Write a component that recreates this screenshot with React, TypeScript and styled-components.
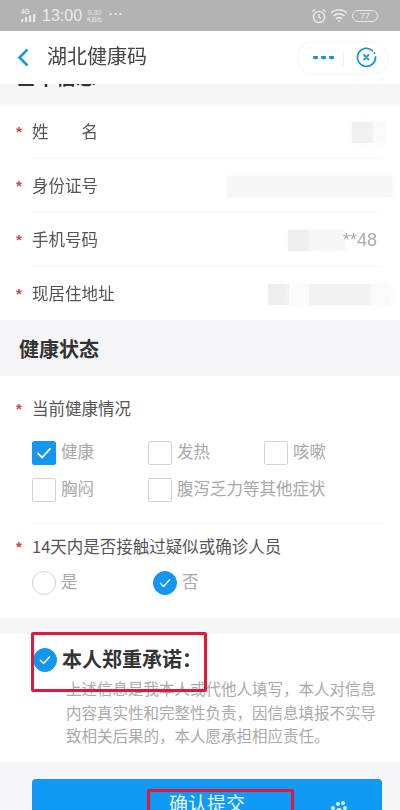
import React from "react";
import styled, { createGlobalStyle } from "styled-components";

const Global = createGlobalStyle`
  html, body { margin: 0; padding: 0; background: #f6f6f8; }
  body { width: 400px; height: 810px; overflow: hidden; font-family: "Noto Sans CJK SC", "Liberation Sans", sans-serif; }
  * { box-sizing: border-box; }
`;
const Page = styled.div`
  position: relative; width: 400px; height: 810px; overflow: hidden; display: flex; flex-direction: column; filter: blur(0.45px);
`;
const StatusBar = styled.div`
  height: 31px; flex: none; background: #b3b3b3; display: flex; align-items: center; padding: 0 22px 0 21px; color: #e9e9e9;
`;
const Time = styled.span` font: 16px "Liberation Sans", sans-serif; margin-left: 4px; `;
const Speed = styled.span`
  font: 7px/7px "Liberation Sans", sans-serif; margin-left: 5px; text-align: center; display: flex; flex-direction: column;
`;
const Ellipsis = styled.span` font: bold 13px "Liberation Sans", sans-serif; margin: -4px 0 0 7px; letter-spacing: 0.5px; `;
const StatusRight = styled.div` margin-left: auto; display: flex; align-items: center; gap: 3px; `;
const Battery = styled.span`
  width: 26px; height: 12px; border: 1px solid #e9e9e9; border-radius: 6px; display: flex; align-items: center; justify-content: center; font: 9px "Liberation Sans", sans-serif; margin-left: 1px;
`;
const Nav = styled.header`
  height: 53px; flex: none; background: #fff; display: flex; align-items: center; padding: 0 11px 0 17px; position: relative; z-index: 1;
`;
const Title = styled.h1` margin: 0 0 0 18px; padding-bottom: 4px; font-size: 20px; line-height: 28px; font-weight: 400; color: #444; `;
const Capsule = styled.div`
  margin-left: auto; width: 92px; height: 34px; border: 1px solid #f3f5f7; border-radius: 17px; display: flex; align-items: center; padding-left: 15px;
`;
const Dots = styled.span` display: flex; gap: 3px; width: 30px; `;
const Dot = styled.i` width: 5px; height: 3px; background: #1a8fd0; border-radius: 1px; `;
const Divider = styled.span` width: 1px; height: 16px; background: #f0f0f0; margin-right: 12px; `;
const Strip = styled.div`
  height: 21px; flex: none; background: #f7f7f7; overflow: hidden; padding-left: 16px;
`;
const ClippedHeading = styled.div`
  font-size: 20px; line-height: 28px; font-weight: 700; color: #333; margin-top: -21px;
`;
const Card = styled.section<{ $h: number }>`
  background: #fff; height: ${(p) => p.$h}px; flex: none; padding: 0 18px 0 16px;
`;
const InfoRow = styled.div<{ $last?: boolean }>`
  height: 54px; display: flex; align-items: center; position: relative;
  &::after { content: ""; display: ${(p) => (p.$last ? "none" : "block")}; position: absolute; left: 16px; right: 0; bottom: 0; height: 1px; background: #f9f9f9; }
`;
const Star = styled.span` width: 16px; flex: none; color: #d6404f; font: bold 15px/16px "Liberation Sans", sans-serif; `;
const Label = styled.span` font-size: 16.5px; line-height: 24px; color: #555; padding-bottom: 3px; `;
const SpacedLabel = styled(Label)` width: 66px; display: flex; justify-content: space-between; `;
const Values = styled.div<{ $bleed?: number }>` margin-left: auto; margin-right: -${(p) => p.$bleed ?? 0}px; display: flex; align-items: center; `;
const Smudge = styled.span<{ $w: number; $h?: number; $c: string }>`
  display: block; width: ${(p) => p.$w}px; height: ${(p) => p.$h ?? 21}px; background: ${(p) => p.$c}; box-shadow: 0 0 7px #f9f9f9;
`;
const Masked = styled.span` font: 18px "Liberation Sans", sans-serif; color: #aaa; margin-right: 5px; margin-left: -2px; `;
const SectionHead = styled.div`
  height: 56px; flex: none; background: #f5f5f8; display: flex; align-items: center; padding: 0 0 0 19px; font-size: 20px; font-weight: 700; color: #333;
`;
const Question = styled.div<{ $top: number }>` height: 24px; display: flex; align-items: center; margin-top: ${(p) => p.$top}px; `;
const CheckGrid = styled.div`
  display: grid; grid-template-columns: 116px 116px 1fr; row-gap: 13px; margin: 20px 0 0 16px; padding-bottom: 21px; border-bottom: 1px solid #f6f6f6;
`;
const Option = styled.div<{ $span?: number }>`
  display: flex; align-items: center; gap: 5px; height: 24px; grid-column: span ${(p) => p.$span ?? 1};
`;
const OptionText = styled.span` font-size: 16.5px; line-height: 24px; color: #a8a8a8; white-space: nowrap; padding-bottom: 4px; `;
const Box = styled.span<{ $on?: boolean }>`
  width: 24px; height: 24px; flex: none; border-radius: 2px; border: 1px solid ${(p) => (p.$on ? "#1296f0" : "#d4d4d4")}; background: ${(p) => (p.$on ? "#1296f0" : "#fff")}; display: flex; align-items: center; justify-content: center;
`;
const Circle = styled.span<{ $on?: boolean }>`
  width: 24px; height: 24px; flex: none; border-radius: 50%; border: 1px solid ${(p) => (p.$on ? "#1296f0" : "#d4d4d4")}; background: ${(p) => (p.$on ? "#1296f0" : "#fff")}; display: flex; align-items: center; justify-content: center;
`;
const RadioRow = styled.div` display: flex; margin: 12px 0 0 16px; `;
const RadioCol = styled.div<{ $w: number }>` width: ${(p) => p.$w}px; `;
const Gap = styled.div` height: 16px; flex: none; background: #f5f5f8; `;
const PromiseCard = styled.section`
  height: 128px; flex: none; background: #fff; padding: 12px 22px 0 33px;
`;
const PromiseHead = styled.div` display: flex; align-items: center; gap: 5px; height: 28px; `;
const PromiseTitle = styled.span` font-size: 20px; line-height: 28px; font-weight: 700; color: #333; white-space: nowrap; padding-bottom: 2px; `;
const PromiseText = styled.p`
  margin: 3px 0 0 33px; font-size: 15.5px; line-height: 23.7px; color: #aaa; width: 314px;
`;
const Footer = styled.div` flex: 1; background: #f5f5f8; padding: 17px 18px 0 32px; `;
const Submit = styled.button`
  position: relative; width: 350px; height: 60px; border: 0; border-radius: 4px; background: #0f9bf5; color: #e8f6ff; font: 19px/26px "Noto Sans CJK SC", sans-serif; padding: 0 0 13px; display: block;
`;
const Paw = styled.svg` position: absolute; left: 297px; top: 21px; `;
const RedMark = styled.div<{ $l: number; $t: number; $w: number; $h: number }>`
  position: absolute; left: ${(p) => p.$l}px; top: ${(p) => p.$t}px; width: ${(p) => p.$w}px; height: ${(p) => p.$h}px; border: 3px solid #e0183c; border-radius: 2px;
`;

const Check = ({ s }: { s: number }) => (
  <svg width={s} height={s} viewBox="0 0 24 24" fill="none" stroke="#fff" strokeWidth="2.4" strokeLinecap="round" strokeLinejoin="round">
    <path d="M4 12.5l5.5 5.5L20 6.5" />
  </svg>
);

export default function App() {
  return (
    <Page>
      <Global />
      <StatusBar>
        <svg width="17" height="15" viewBox="0 0 17 15" fill="#e9e9e9">
          <text x="0" y="6" fontSize="6.5" fontWeight="700" fontFamily="Liberation Sans">4G</text>
          <rect x="0" y="11" width="2.2" height="3" /><rect x="4" y="9" width="2.2" height="5" /><rect x="8" y="7.5" width="2.2" height="6.5" /><rect x="12" y="6" width="2.2" height="8" />
        </svg>
        <Time>13:00</Time>
        <Speed><span>0.30</span><span>KB/s</span></Speed>
        <Ellipsis>···</Ellipsis>
        <StatusRight>
          <svg width="16" height="16" viewBox="0 0 16 16" fill="none" stroke="#e9e9e9" strokeWidth="1.5">
            <circle cx="8" cy="9" r="5.6" /><path d="M8 6v3l2 1.5M1.5 3.5L4 1.5M14.5 3.5L12 1.5" />
          </svg>
          <svg width="18" height="15" viewBox="0 0 18 15" fill="none" stroke="#e9e9e9" strokeWidth="1.6">
            <path d="M1 5c4.5-4.4 11.500-4.400 16 0M3.500 8c3-2.800 8-2.800 11 0M6 10.800c1.700-1.400 4.300-1.400 6 0" /><circle cx="9" cy="13" r="1" fill="#e9e9e9" stroke="none" />
          </svg>
          <Battery>77</Battery>
        </StatusRight>
      </StatusBar>
      <Nav>
        <svg width="12" height="19" viewBox="0 0 12 19" fill="none" stroke="#1b9ad6" strokeWidth="2.600">
          <path d="M10.500 1.500L2.500 9.500l8 8" />
        </svg>
        <Title>湖北健康码</Title>
        <Capsule>
          <Dots><Dot /><Dot /><Dot /></Dots>
          <Divider />
          <svg width="21" height="21" viewBox="0 0 21 21" fill="none" stroke="#1b9ad6" strokeWidth="1.800" strokeLinecap="round">
            <path d="M16.500 3.600A9 9 0 1 0 19.500 10" />
            <path d="M8 8l4.500 4.500M12.500 8L8 12.500" />
            <circle cx="18.500" cy="6" r="1" fill="#1b9ad6" stroke="none" />
          </svg>
        </Capsule>
      </Nav>
      <Strip><ClippedHeading>基本信息</ClippedHeading></Strip>
      <Card $h={215}>
        <InfoRow>
          <Star>*</Star><SpacedLabel><span>姓</span><span>名</span></SpacedLabel>
          <Values $bleed={3}><Smudge $w={21} $c="#f0f0f0" /><Smudge $w={12} $c="#fafafa" /></Values>
        </InfoRow>
        <InfoRow>
          <Star>*</Star><Label>身份证号</Label>
          <Values $bleed={10}><Smudge $w={165} $c="#f6f6f6" /></Values>
        </InfoRow>
        <InfoRow>
          <Star>*</Star><Label>手机号码</Label>
          <Values><Smudge $w={22} $c="#eeeeee" /><Smudge $w={35} $c="#f7f7f7" /><Masked>**48</Masked></Values>
        </InfoRow>
        <InfoRow $last>
          <Star>*</Star><Label>现居住地址</Label>
          <Values $bleed={9}><Smudge $w={21} $c="#efefef" /><Smudge $w={20} $c="#fbfbfb" /><Smudge $w={62} $c="#f2f2f2" /><Smudge $w={20} $c="#fafafa" /></Values>
        </InfoRow>
      </Card>
      <SectionHead>健康状态</SectionHead>
      <Card $h={242}>
        <Question $top={21}><Star>*</Star><Label>当前健康情况</Label></Question>
        <CheckGrid>
          <Option><Box $on><Check s={18} /></Box><OptionText>健康</OptionText></Option>
          <Option><Box /><OptionText>发热</OptionText></Option>
          <Option><Box /><OptionText>咳嗽</OptionText></Option>
          <Option><Box /><OptionText>胸闷</OptionText></Option>
          <Option $span={2}><Box /><OptionText>腹泻乏力等其他症状</OptionText></Option>
        </CheckGrid>
        <Question $top={11}><Star>*</Star><Label>14天内是否接触过疑似或确诊人员</Label></Question>
        <RadioRow>
          <RadioCol $w={121}><Option><Circle /><OptionText>是</OptionText></Option></RadioCol>
          <RadioCol $w={60}><Option><Circle $on><Check s={14} /></Circle><OptionText>否</OptionText></Option></RadioCol>
        </RadioRow>
      </Card>
      <Gap />
      <PromiseCard>
        <PromiseHead>
          <Circle $on><Check s={14} /></Circle>
          <PromiseTitle>本人郑重承诺：</PromiseTitle>
        </PromiseHead>
        <PromiseText>上述信息是我本人或代他人填写，本人对信息内容真实性和完整性负责，因信息填报不实导致相关后果的，本人愿承担相应责任。</PromiseText>
      </PromiseCard>
      <Footer>
        <Submit>
          确认提交
          <Paw width="20" height="14" viewBox="0 0 20 14" fill="#dff2ff">
            <circle cx="4" cy="8" r="2" /><circle cx="9" cy="4" r="2" /><circle cx="14" cy="3" r="2" /><circle cx="16" cy="8" r="2" /><circle cx="10" cy="11" r="3" />
          </Paw>
        </Submit>
      </Footer>
      <RedMark $l={31} $t={632} $w={176} $h={60} />
      <RedMark $l={147} $t={789} $w={147} $h={40} />
    </Page>
  );
}
